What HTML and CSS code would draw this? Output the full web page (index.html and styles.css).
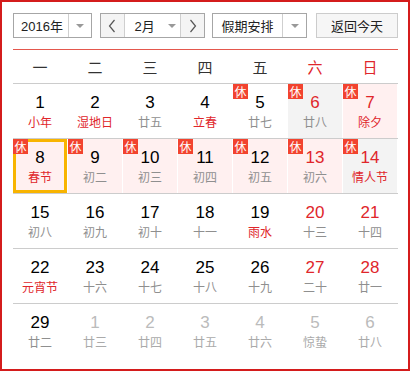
FILE: index.html
```html
<!DOCTYPE html>
<html lang="zh">
<head>
<meta charset="utf-8">
<title>日历</title>
<link rel="stylesheet" href="styles.css">
</head>
<body>
<div class="cal">
  <div class="toolbar">
    <div class="sel year">
      <span class="sel-text">2016年</span>
      <span class="sel-arrow"><i class="tri"></i></span>
    </div>
    <div class="month-group">
      <span class="nav"><svg width="8" height="14" viewBox="0 0 8 14"><polyline points="6.5,1 1.5,7 6.5,13" fill="none" stroke="#555" stroke-width="1.2"/></svg></span>
      <span class="month"><span class="month-text">2月</span><i class="tri"></i></span>
      <span class="nav"><svg width="8" height="14" viewBox="0 0 8 14"><polyline points="1.5,1 6.5,7 1.5,13" fill="none" stroke="#555" stroke-width="1.2"/></svg></span>
    </div>
    <div class="sel holiday">
      <span class="sel-text">假期安排</span>
      <span class="sel-arrow"><i class="tri"></i></span>
    </div>
    <div class="today-btn">返回今天</div>
  </div>
  <div class="sep"></div>
  <div class="weekhead">
    <span>一</span><span>二</span><span>三</span><span>四</span><span>五</span><span class="red">六</span><span class="red">日</span>
  </div>
  <div class="row">
    <div class="cell"><b>1</b><em class="red">小年</em></div>
    <div class="cell"><b>2</b><em class="red">湿地日</em></div>
    <div class="cell"><b>3</b><em>廿五</em></div>
    <div class="cell"><b>4</b><em class="red">立春</em></div>
    <div class="cell"><i class="rest">休</i><b>5</b><em>廿七</em></div>
    <div class="cell gray"><i class="rest">休</i><b class="red">6</b><em>廿八</em></div>
    <div class="cell pink"><i class="rest">休</i><b class="red">7</b><em class="red">除夕</em></div>
  </div>
  <div class="row">
    <div class="cell pink today"><i class="rest">休</i><b>8</b><em class="red">春节</em></div>
    <div class="cell pink"><i class="rest">休</i><b>9</b><em>初二</em></div>
    <div class="cell pink"><i class="rest">休</i><b>10</b><em>初三</em></div>
    <div class="cell pink"><i class="rest">休</i><b>11</b><em>初四</em></div>
    <div class="cell pink"><i class="rest">休</i><b>12</b><em>初五</em></div>
    <div class="cell pink"><i class="rest">休</i><b class="red">13</b><em>初六</em></div>
    <div class="cell gray"><i class="rest">休</i><b class="red">14</b><em class="red">情人节</em></div>
  </div>
  <div class="row">
    <div class="cell"><b>15</b><em>初八</em></div>
    <div class="cell"><b>16</b><em>初九</em></div>
    <div class="cell"><b>17</b><em>初十</em></div>
    <div class="cell"><b>18</b><em>十一</em></div>
    <div class="cell"><b>19</b><em class="red">雨水</em></div>
    <div class="cell"><b class="red">20</b><em>十三</em></div>
    <div class="cell"><b class="red">21</b><em>十四</em></div>
  </div>
  <div class="row">
    <div class="cell"><b>22</b><em class="red">元宵节</em></div>
    <div class="cell"><b>23</b><em>十六</em></div>
    <div class="cell"><b>24</b><em>十七</em></div>
    <div class="cell"><b>25</b><em>十八</em></div>
    <div class="cell"><b>26</b><em>十九</em></div>
    <div class="cell"><b class="red">27</b><em>二十</em></div>
    <div class="cell"><b class="red">28</b><em>廿一</em></div>
  </div>
  <div class="row last">
    <div class="cell"><b>29</b><em>廿二</em></div>
    <div class="cell other"><b>1</b><em>廿三</em></div>
    <div class="cell other"><b>2</b><em>廿四</em></div>
    <div class="cell other"><b>3</b><em>廿五</em></div>
    <div class="cell other"><b>4</b><em>廿六</em></div>
    <div class="cell other"><b>5</b><em>惊蛰</em></div>
    <div class="cell other"><b>6</b><em>廿八</em></div>
  </div>
</div>
</body>
</html>
```
FILE: styles.css
```css
* { box-sizing: border-box; }
html, body { margin: 0; padding: 0; background: #fff; }
body { font-family: "Liberation Sans", "Noto Sans CJK SC", sans-serif; color: #000; }

.cal {
  width: 410px;
  height: 371px;
  border: 2px solid #d41c1c;
  padding: 11px 0 0 11px;
}

.toolbar {
  display: flex;
  height: 25px;
  width: 385px;
  font-size: 13px;
  color: #222;
}

.sel {
  display: flex;
  height: 25px;
  border: 1px solid #a6a6a6;
  background: #fff;
}
.sel-text {
  display: flex;
  align-items: center;
  justify-content: center;
}
.sel-arrow {
  display: flex;
  align-items: center;
  justify-content: center;
  border-left: 1px solid #cfcfcf;
}
.tri {
  display: block;
  width: 0;
  height: 0;
  border-left: 4px solid transparent;
  border-right: 4px solid transparent;
  border-top: 4px solid #999;
}
.year { width: 79px; }
.year .sel-text { width: 54px; padding-left: 2px; }
.year .sel-arrow { width: 23px; }

.month-group {
  display: flex;
  margin-left: 8px;
  width: 105px;
  height: 25px;
  border: 1px solid #a6a6a6;
}
.nav {
  width: 23px;
  display: flex;
  align-items: center;
  justify-content: center;
  background: #f4f4f4;
}
.month {
  width: 59px;
  display: flex;
  align-items: center;
  border-left: 1px solid #cfcfcf;
  border-right: 1px solid #cfcfcf;
  padding-left: 10px;
}
.month-text { width: 33px; }

.holiday { width: 95px; margin-left: 7px; }
.holiday .sel-text { width: 69px; }
.holiday .sel-arrow { width: 24px; }

.today-btn {
  margin-left: 9px;
  width: 82px;
  height: 25px;
  border: 1px solid #cccccc;
  background: #f6f6f6;
  display: flex;
  align-items: center;
  justify-content: center;
}

.sep {
  margin-top: 11px;
  width: 385px;
  height: 1px;
  background: #e4574d;
}

.weekhead {
  display: grid;
  grid-template-columns: repeat(7, 54px);
  column-gap: 1px;
  width: 385px;
  height: 34px;
  border-bottom: 1px solid #cccccc;
  font-family: "Noto Sans CJK SC", sans-serif;
  font-size: 15px;
  color: #333;
}
.weekhead span {
  display: flex;
  align-items: center;
  justify-content: center;
}
.weekhead .red { color: #e0262b; }

.row {
  display: grid;
  grid-template-columns: repeat(7, 54px);
  column-gap: 1px;
  width: 385px;
  height: 55px;
  border-bottom: 1px solid #cccccc;
}
.row.last { border-bottom: none; }

.cell {
  position: relative;
  height: 54px;
  padding-top: 9px;
  text-align: center;
}
.cell.pink { background: #fff0f0; }
.cell.gray { background: #f3f3f3; }
.cell.today { border: 3px solid #f8b400; padding-top: 6px; }

.cell b {
  display: block;
  font-weight: normal;
  font-size: 17px;
  line-height: 20px;
  color: #000;
}
.cell em {
  display: block;
  font-style: normal;
  font-family: "Noto Sans CJK SC", sans-serif;
  font-size: 12px;
  line-height: 18px;
  color: #8f8f8f;
}
.cell .red { color: #e0262b; }
.cell.other b { color: #bbbbbb; }
.cell.other em { color: #aaaaaa; }

.rest {
  position: absolute;
  left: 0;
  top: 0;
  width: 15px;
  height: 15px;
  background: #f2432f;
  color: #fff;
  font-style: normal;
  font-family: "Noto Sans CJK SC", sans-serif;
  font-size: 12px;
  line-height: 15px;
  text-align: center;
  z-index: 1;
}
.cell.today .rest { left: -3px; top: -3px; }
```
